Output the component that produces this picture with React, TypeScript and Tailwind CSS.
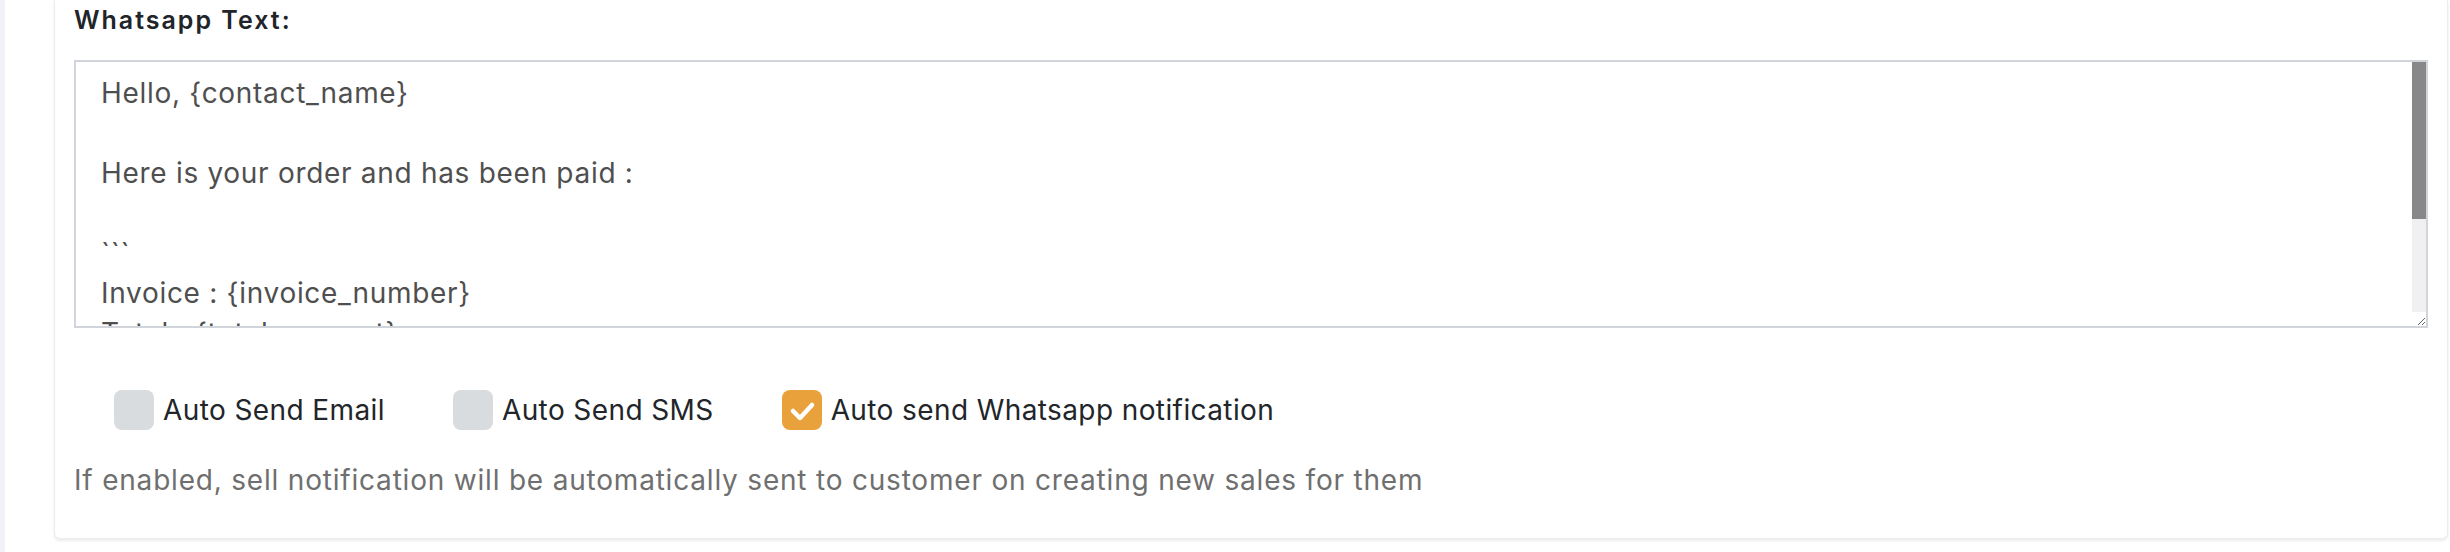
import React from "react";

const message = `Hello, {contact_name}

Here is your order and has been paid :

\`\`\`
Invoice : {invoice_number}
Total : {total_amount}
Paid : {paid_amount}
\`\`\`
Thank you`;

const Check = ({ checked, label }: { checked?: boolean; label: string }) => {
    return (
        <label className="flex items-center gap-[9px] cursor-pointer">
            <span
                className={
                    checked
                        ? "w-[40px] h-[40px] rounded-[8px] bg-[#e9a23b] flex items-center justify-center"
                        : "w-[40px] h-[40px] rounded-[8px] bg-[#d9dcdf]"
                }
            >
                {checked && (
                    <svg width="40" height="40" viewBox="0 0 40 40">
                        <polyline
                            points="11,21 18,28 30,15"
                            fill="none"
                            stroke="#fff"
                            strokeWidth="4.5"
                            strokeLinecap="round"
                            strokeLinejoin="round"
                        />
                    </svg>
                )}
            </span>
            <span className="text-[28px] leading-[40px] tracking-[0.4px] text-[#222529]">{label}</span>
        </label>
    );
};

const App = () => {
    return (
        <div
            className="w-full h-[552px] flex bg-white overflow-hidden"
            style={{ fontFamily: "Inter, 'Noto Sans', sans-serif" }}
        >
            <div className="w-[5px] bg-[#f1f1f9] shrink-0" />
            <div className="pl-[49px] pr-[2px] w-full">
                <div className="h-[539px] bg-white border-x border-b border-[#ececf0] rounded-b-[6px] shadow-[0_2px_3px_rgba(0,0,0,0.08)] pl-[19px] pr-[19px] pt-[4px]">
                    <div className="text-[25px] leading-[33px] font-semibold tracking-[2px] text-[#212529]">
                        Whatsapp Text:
                    </div>
                    <div className="relative mt-[23px]">
                        <textarea
                            className="block w-full h-[268px] border-2 border-[#d1d5db] pt-[11px] pb-[11px] pl-[25px] pr-[30px] text-[28px] leading-[40px] tracking-[0.7px] text-[#4f4f4f] outline-none overflow-hidden"
                            defaultValue={message}
                        />
                        <div className="absolute top-[2px] right-[2px] w-[14px] h-[250px] bg-[#f0f0f0]">
                            <div className="h-[157px] bg-[#888888]" />
                        </div>
                    </div>
                    <div className="mt-[62px] flex items-center gap-[68px] pl-[40px]">
                        <Check label="Auto Send Email" />
                        <Check label="Auto Send SMS" />
                        <Check checked label="Auto send Whatsapp notification" />
                    </div>
                    <p className="mt-[30px] text-[28px] leading-[40px] tracking-[0.8px] text-[#6f6f6f]">
                        If enabled, sell notification will be automatically sent to customer on creating new sales for them
                    </p>
                </div>
            </div>
        </div>
    );
};

export default App;
